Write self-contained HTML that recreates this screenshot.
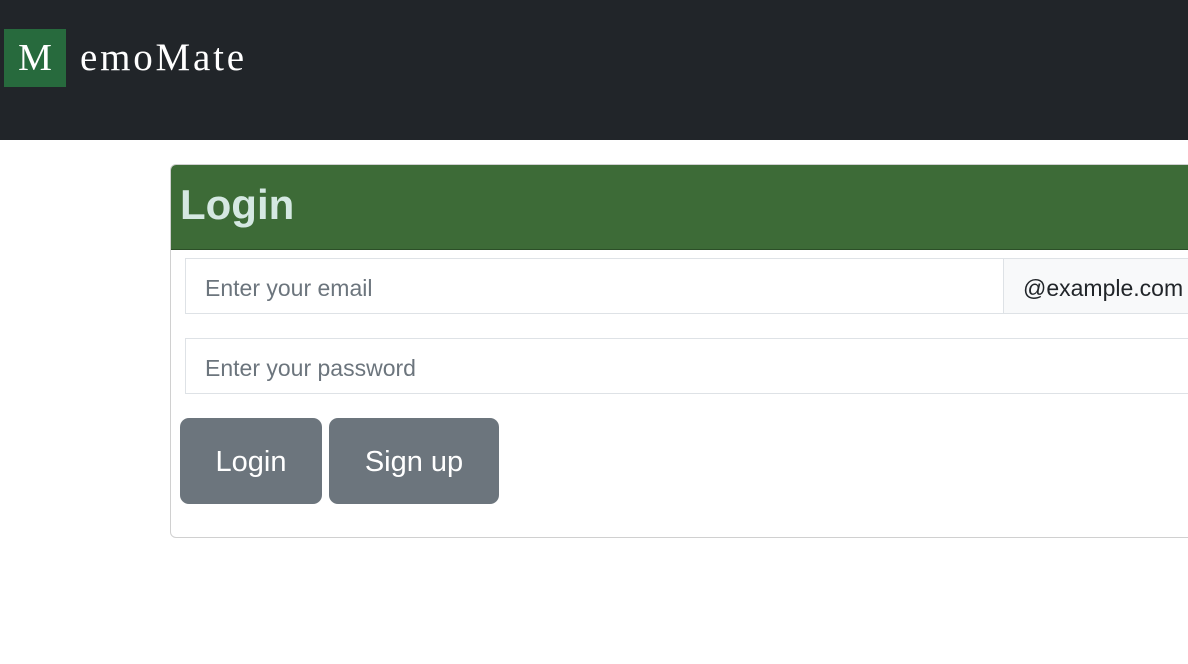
<!DOCTYPE html>
<html><head><style>
body{margin:0;width:1188px;height:664px;overflow:hidden;background:#fff;font-family:"Liberation Sans",sans-serif;position:relative}
.nav{position:absolute;left:0;top:0;width:1188px;height:140px;background:#212529}
.logo{position:absolute;left:4px;top:29px;width:62px;height:58px;background:#276a3d;color:#fff;font:38px "Liberation Serif",serif;text-align:center;line-height:58px}
.brand{position:absolute;left:80px;top:33px;color:#fff;font:39px "Liberation Serif",serif;line-height:50px;letter-spacing:2.8px}
.card{position:absolute;left:170px;top:164px;width:1040px;height:372px;border:1px solid #d0d0d0;border-radius:6px;overflow:hidden}
.hdr{height:84px;background:#3d6b37;color:#d5e8e2;font-size:42px;font-weight:bold;line-height:80px;padding-left:9px;border-bottom:1px solid #2c4f28}
.in{position:absolute;border:1px solid #dee2e6;background:#fff;color:#6c757d;font-size:23px;line-height:58px;padding-left:19px;box-sizing:border-box}
.add{position:absolute;left:1003px;top:258px;width:200px;height:56px;background:#f8f9fa;border:1px solid #dee2e6;box-sizing:border-box;color:#212529;font-size:23px;line-height:58px;padding-left:19px}
.btn{position:absolute;top:418px;height:86px;background:#6c757d;color:#fff;border-radius:9px;font-size:29px;line-height:88px;text-align:center}
</style></head><body>
<div class="nav"><div class="logo">M</div><div class="brand">emoMate</div></div>
<div class="card"><div class="hdr">Login</div></div>
<div class="in" style="left:185px;top:258px;width:819px;height:56px">Enter your email</div>
<div class="add">@example.com</div>
<div class="in" style="left:185px;top:338px;width:1020px;height:56px">Enter your password</div>
<div class="btn" style="left:180px;width:142px">Login</div>
<div class="btn" style="left:329px;width:170px">Sign up</div>
</body></html>
